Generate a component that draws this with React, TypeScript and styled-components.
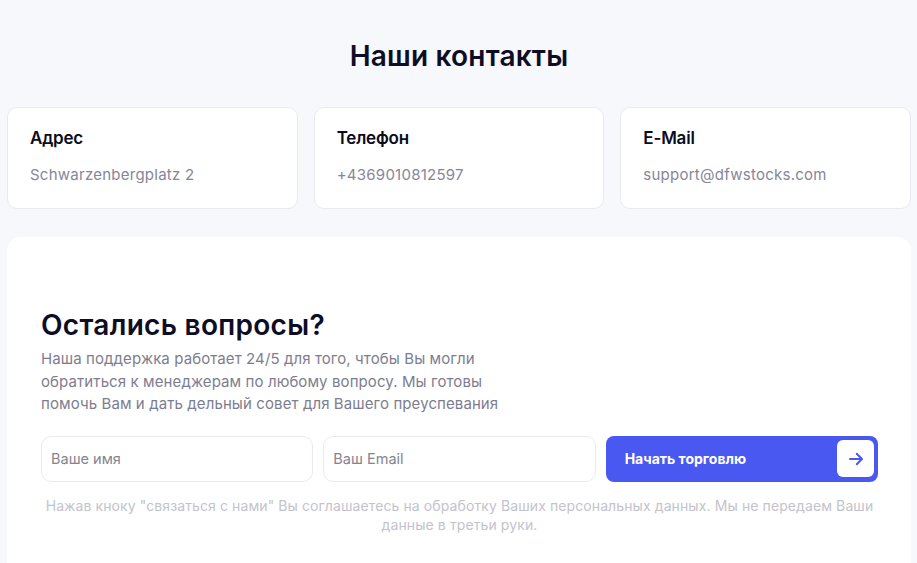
import React from 'react';
import styled, { createGlobalStyle } from 'styled-components';

const GlobalStyle = createGlobalStyle`
  html, body {
    margin: 0;
    padding: 0;
    background: #f7f8fc;
    font-family: "Inter", "Noto Sans", sans-serif;
  }
`;

const Page = styled.div`
  padding: 0 6px 0 7px;
  height: 563px;
  overflow: hidden;
`;

const SectionTitle = styled.h2`
  margin: 0;
  padding-top: 38px;
  text-align: center;
  font-size: 28px;
  line-height: 36px;
  font-weight: 600;
  color: #0e0d26;
  letter-spacing: 0.2px;
`;

const Cards = styled.div`
  display: grid;
  grid-template-columns: repeat(3, 1fr);
  gap: 16px;
  margin-top: 33px;
`;

const Card = styled.div`
  background: #fff;
  border: 1px solid #e9eaf0;
  border-radius: 10px;
  height: 102px;
  padding: 20px 22px 0;
  box-sizing: border-box;
`;

const CardLabel = styled.div`
  font-size: 17px;
  font-weight: 600;
  color: #0b0b1a;
  line-height: 20px;
  letter-spacing: -0.2px;
`;

const CardValue = styled.div`
  margin-top: 17px;
  font-size: 15px;
  color: #86869a;
  line-height: 20px;
  letter-spacing: 0.25px;
`;

const Panel = styled.div`
  margin-top: 28px;
  background: #fff;
  border-radius: 14px 14px 0 0;
  padding: 70px 33px 0 34px;
  height: 400px;
  box-sizing: border-box;
`;

const Heading = styled.h3`
  margin: 0;
  font-size: 28px;
  line-height: 36px;
  font-weight: 600;
  color: #0e0d26;
  letter-spacing: 0.3px;
`;

const Lead = styled.p`
  margin: 5px 0 0;
  max-width: 480px;
  font-size: 15px;
  line-height: 22.5px;
  color: #7d7d90;
  letter-spacing: 0.1px;
`;

const FormRow = styled.div`
  display: grid;
  grid-template-columns: repeat(3, 1fr);
  gap: 10px;
  margin-top: 20px;
`;

const Field = styled.input`
  height: 46px;
  box-sizing: border-box;
  border: 1px solid #eaebf0;
  border-radius: 10px;
  padding: 0 9px;
  font-family: inherit;
  font-size: 14.5px;
  color: #333;
  outline: none;
  &::placeholder {
    color: #84848f;
  }
`;

const SubmitButton = styled.button`
  height: 46px;
  border: none;
  border-radius: 8px;
  background: #4a58f2;
  display: flex;
  align-items: center;
  justify-content: space-between;
  padding: 0 4px 0 19px;
  font-family: inherit;
  font-size: 14px;
  font-weight: 700;
  color: #fff;
  cursor: pointer;
`;

const ArrowBox = styled.span`
  width: 37px;
  height: 37px;
  border-radius: 6px;
  background: #fff;
  display: flex;
  align-items: center;
  justify-content: center;
`;

const Note = styled.p`
  margin: 14px -4px 0;
  text-align: center;
  font-size: 14px;
  line-height: 19px;
  color: #c3c3cc;
  letter-spacing: 0.1px;
`;

const contacts = [
  { label: 'Адрес', value: 'Schwarzenbergplatz 2' },
  { label: 'Телефон', value: '+4369010812597' },
  { label: 'E-Mail', value: 'support@dfwstocks.com' },
];

const App: React.FC = () => (
  <>
    <GlobalStyle />
    <Page>
      <SectionTitle>Наши контакты</SectionTitle>
      <Cards>
        {contacts.map(c => (
          <Card key={c.label}>
            <CardLabel>{c.label}</CardLabel>
            <CardValue>{c.value}</CardValue>
          </Card>
        ))}
      </Cards>
      <Panel>
        <Heading>Остались вопросы?</Heading>
        <Lead>
          Наша поддержка работает 24/5 для того, чтобы Вы могли обратиться к менеджерам по любому
          вопросу. Мы готовы помочь Вам и дать дельный совет для Вашего преуспевания
        </Lead>
        <FormRow>
          <Field placeholder="Ваше имя" />
          <Field placeholder="Ваш Email" />
          <SubmitButton>
            Начать торговлю
            <ArrowBox>
              <svg width="18" height="18" viewBox="0 0 24 24" fill="none" stroke="#4a58f2" strokeWidth="2.6" strokeLinecap="round" strokeLinejoin="round">
                <path d="M4 12h15" />
                <path d="M13 5l7 7-7 7" />
              </svg>
            </ArrowBox>
          </SubmitButton>
        </FormRow>
        <Note>
          Нажав кноку "связаться с нами" Вы соглашаетесь на обработку Ваших персональных данных. Мы не
          передаем Ваши данные в третьи руки.
        </Note>
      </Panel>
    </Page>
  </>
);

export default App;
